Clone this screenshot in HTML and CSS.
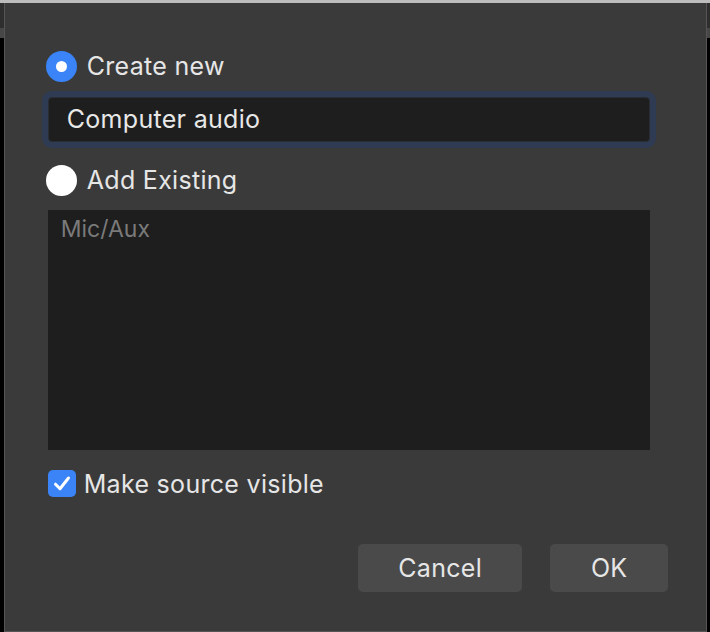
FILE: index.html
```html
<!DOCTYPE html>
<html>
<head>
<meta charset="utf-8">
<link rel="stylesheet" href="styles.css">
</head>
<body>
<div class="topbar"></div>
<div class="frame">
  <div class="side"></div>
  <div class="dialog">
    <label class="radio-row">
      <span class="radio radio-on"><span class="dot"></span></span>
      <span class="label">Create new</span>
    </label>
    <div class="input-wrap">
      <div class="input">Computer audio</div>
    </div>
    <label class="radio-row radio-row-2">
      <span class="radio radio-off"></span>
      <span class="label">Add Existing</span>
    </label>
    <div class="list">
      <div class="list-item">Mic/Aux</div>
    </div>
    <label class="check-row">
      <span class="checkbox">
        <svg width="28" height="27" viewBox="0 0 28 27"><path d="M7.5 14.2 L12 18.8 L20.5 8" fill="none" stroke="#fff" stroke-width="3" stroke-linecap="round" stroke-linejoin="round"/></svg>
      </span>
      <span class="label">Make source visible</span>
    </label>
    <div class="buttons">
      <button class="btn btn-cancel">Cancel</button>
      <button class="btn btn-ok">OK</button>
    </div>
  </div>
  <div class="side side-right"></div>
</div>
</body>
</html>
```
FILE: styles.css
```css
html, body {
  margin: 0;
  padding: 0;
  background: #000;
  width: 710px;
  height: 632px;
  overflow: hidden;
  font-family: Inter, "Liberation Sans", sans-serif;
}
.topbar {
  height: 3px;
  background: #bdbdbd;
}
.frame {
  display: flex;
  height: 629px;
}
.side {
  width: 4px;
  background: linear-gradient(to bottom, #2e2e2e 0, #2e2e2e 25px, #474747 25px, #474747 35px, #000 35px);
}
.side-right {
  width: 3px;
}
.dialog {
  width: 645px;
  background: #3a3a3a;
  border-left: 1px solid #555;
  border-right: 1px solid #555;
  border-bottom: 1px solid #555;
  padding: 47px 56px 0 43px;
  display: flex;
  flex-direction: column;
  color: #e6e6e6;
}
.radio-row {
  display: flex;
  align-items: center;
  gap: 10px;
  margin-left: -2px;
  height: 32px;
}
.radio {
  width: 31px;
  height: 31px;
  border-radius: 50%;
  display: flex;
  align-items: center;
  justify-content: center;
  flex: none;
}
.radio-on {
  background: #3a84f7;
}
.radio-off {
  background: #fff;
}
.dot {
  width: 11px;
  height: 11px;
  border-radius: 50%;
  background: #fff;
}
.label {
  font-size: 25px;
  letter-spacing: 0.3px;
  color: #e6e6e6;
}
.input-wrap {
  margin-top: 15px;
}
.input {
  height: 43px;
  background: #1e1e1e;
  border: 1px solid #2a2d33;
  border-radius: 4px;
  box-shadow: 0 0 0 6px #2e3b52;
  font-size: 25px;
  letter-spacing: 0.3px;
  line-height: 43px;
  padding-left: 18px;
  color: #e8e8e8;
}
.radio-row-2 {
  margin-top: 22px;
}
.list {
  margin-top: 14px;
  height: 240px;
  background: #1e1e1e;
  padding: 5px 13px;
  box-sizing: border-box;
}
.list-item {
  font-size: 23px;
  color: #7a7a7a;
}
.check-row {
  display: flex;
  align-items: center;
  gap: 8px;
  margin-top: 20px;
  height: 27px;
}
.checkbox {
  width: 28px;
  height: 27px;
  background: #3a84f7;
  border-radius: 5px;
  display: flex;
  flex: none;
}
.buttons {
  display: flex;
  justify-content: flex-end;
  gap: 28px;
  margin-top: 47px;
  margin-right: -18px;
}
.btn {
  height: 48px;
  border: none;
  border-radius: 5px;
  background: #4a4a4a;
  color: #e6e6e6;
  font-family: Inter, "Liberation Sans", sans-serif;
  font-size: 25px;
  letter-spacing: 0.3px;
  padding: 0;
}
.btn-cancel {
  width: 164px;
}
.btn-ok {
  width: 118px;
}
```
